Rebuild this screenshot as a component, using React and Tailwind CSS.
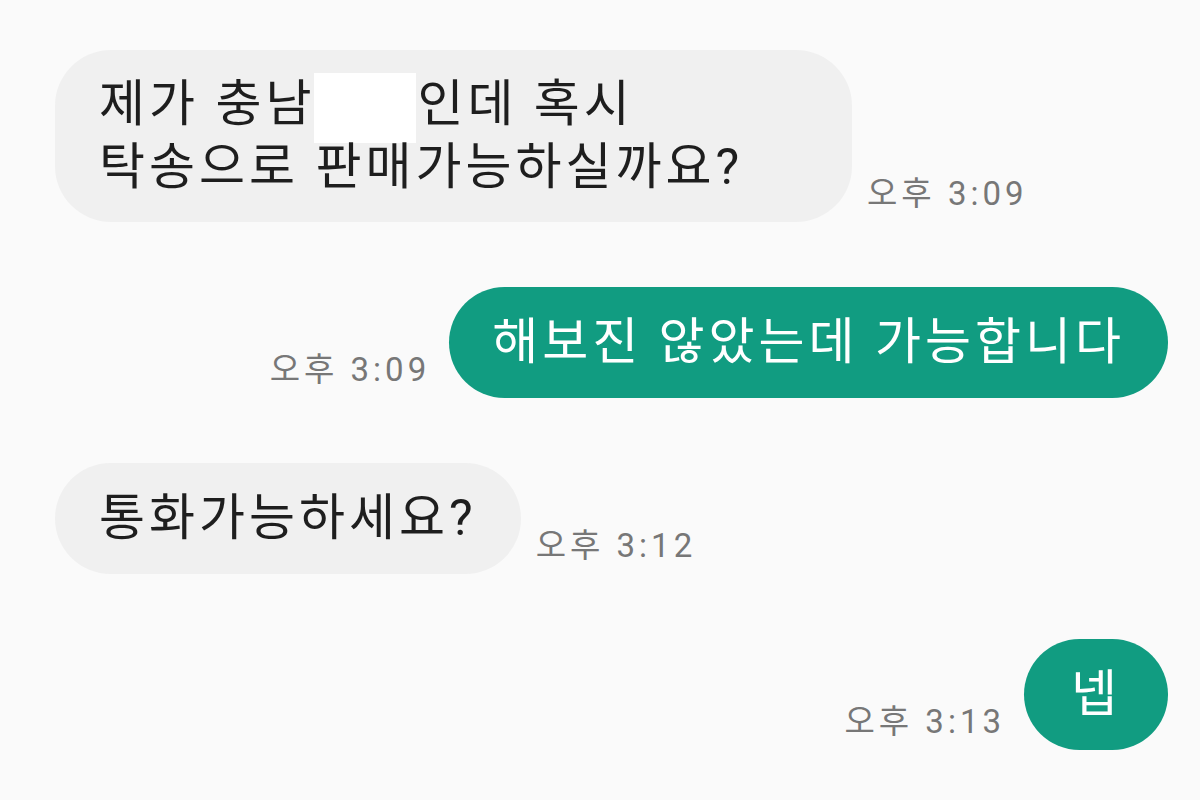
import React from 'react';

const FONT = "font-['Roboto','Noto_Sans_CJK_KR',sans-serif]";

function Time({ children }) {
  return (
    <span className="shrink-0 text-[33px] tracking-[4px] leading-none text-[#777777] mb-[12px] whitespace-nowrap">
      {children}
    </span>
  );
}

function Incoming({ children, time, className = 'leading-[63px]' }) {
  return (
    <div className="flex items-end gap-[15px]">
      <div className={`bg-[#f0f0f0] text-[#1e1e1e] rounded-[56px] px-[44px] py-[24px] text-[50px] tracking-[4px] ${className}`}>
        {children}
      </div>
      <Time>{time}</Time>
    </div>
  );
}

function Outgoing({ children, time, className = 'px-[43px]' }) {
  return (
    <div className="flex items-end justify-end gap-[19px]">
      <Time>{time}</Time>
      <div className={`bg-[#119c81] text-white rounded-[56px] py-[24px] text-[50px] tracking-[4px] leading-[63px] whitespace-nowrap ${className}`}>
        {children}
      </div>
    </div>
  );
}

export default function App() {
  return (
    <div className={`w-[1200px] h-[800px] overflow-hidden bg-[#fafafa] pt-[50px] pl-[55px] pr-[32px] flex flex-col gap-[65px] ${FONT}`}>
      <Incoming time="오후 3:09" className="w-[797px] leading-[61px]">
        제가 충남
        <span className="inline-block align-middle w-[102px] h-[70px] -my-[6px] -ml-[1px] mr-[1px] bg-white" />
        인데 혹시
        <br />
        탁송으로 판매가능하실까요?
      </Incoming>
      <Outgoing time="오후 3:09">해보진 않았는데 가능합니다</Outgoing>
      <Incoming time="오후 3:12">통화가능하세요?</Incoming>
      <Outgoing time="오후 3:13" className="px-[47px]">넵</Outgoing>
    </div>
  );
}
